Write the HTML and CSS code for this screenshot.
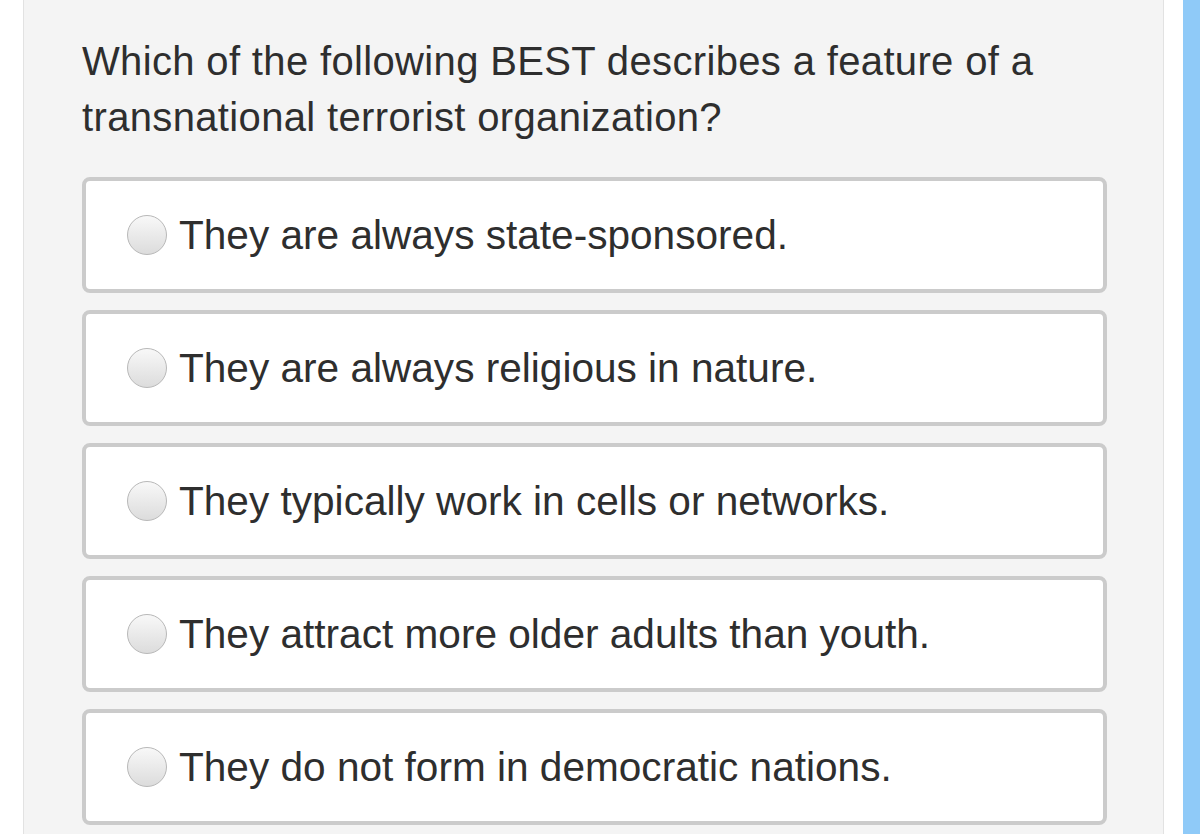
FILE: index.html
```html
<!DOCTYPE html>
<html lang="en">
<head>
<meta charset="utf-8">
<title>Question</title>
<link rel="stylesheet" href="styles.css">
</head>
<body>
<div class="page">
  <main class="panel">
    <p class="question">Which of the following BEST describes a feature of a transnational terrorist organization?</p>
    <div class="options">
      <label class="option"><span class="radio"></span><span class="label">They are always state-sponsored.</span></label>
      <label class="option"><span class="radio"></span><span class="label">They are always religious in nature.</span></label>
      <label class="option"><span class="radio"></span><span class="label">They typically work in cells or networks.</span></label>
      <label class="option"><span class="radio"></span><span class="label">They attract more older adults than youth.</span></label>
      <label class="option"><span class="radio"></span><span class="label">They do not form in democratic nations.</span></label>
    </div>
  </main>
  <div class="gutter"></div>
  <div class="scrollbar"></div>
</div>
</body>
</html>
```
FILE: styles.css
```css
html, body {
  margin: 0;
  padding: 0;
  background: #ffffff;
  height: 100%;
  overflow: hidden;
}
body {
  font-family: "Liberation Sans", Arial, Helvetica, sans-serif;
  color: #2e2e2e;
}
.page {
  display: flex;
  height: 834px;
  padding-left: 23px;
  box-sizing: border-box;
}
.panel {
  width: 1141px;
  box-sizing: border-box;
  background: #f4f4f4;
  border-left: 1px solid #e2e2e2;
  border-right: 1px solid #e2e2e2;
  padding: 33px 40px 0 58px;
}
.gutter {
  width: 19px;
  background: #ffffff;
}
.scrollbar {
  flex: 1;
  background: #8fcaf8;
}
.question {
  margin: 0;
  font-size: 40px;
  letter-spacing: 0.35px;
  line-height: 56px;
}
.options {
  margin-top: 32px;
  margin-right: 16px;
  display: flex;
  flex-direction: column;
  gap: 17px;
}
.option {
  display: flex;
  align-items: center;
  height: 116px;
  box-sizing: border-box;
  background: #ffffff;
  border: 4px solid #cbcbcb;
  border-radius: 8px;
  padding-left: 41px;
  gap: 12px;
}
.radio {
  width: 40px;
  height: 40px;
  box-sizing: border-box;
  border-radius: 50%;
  border: 1.5px solid #b8b8b8;
  background: linear-gradient(#f8f8f8, #dcdcdc);
  flex: none;
}
.label {
  font-size: 40.6px;
  line-height: 48px;
}
```
